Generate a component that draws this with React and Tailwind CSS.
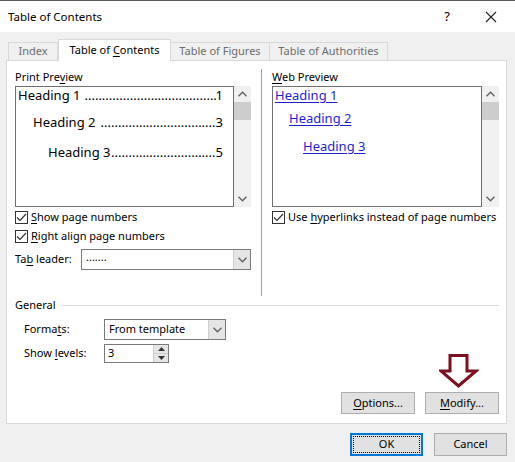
import React from "react";

const font = { fontFamily: '"Noto Sans", "Open Sans", sans-serif' };

const Chevron = ({ dir = "down", className = "" }) => (
  <svg width="9" height="6" viewBox="0 0 9 6" className={className}>
    {dir === "down" ? (
      <path d="M0.5 0.8 L4.5 4.8 L8.5 0.8" fill="none" stroke="#606060" strokeWidth="1.3" />
    ) : (
      <path d="M0.5 5.2 L4.5 1.2 L8.5 5.2" fill="none" stroke="#606060" strokeWidth="1.3" />
    )}
  </svg>
);

const Scrollbar = () => (
  <div className="flex w-[17px] shrink-0 flex-col items-center bg-[#f0f0f0]">
    <div className="flex h-[16px] items-center justify-center">
      <Chevron dir="up" />
    </div>
    <div className="h-[18px] w-[17px] bg-[#cdcdcd]" />
    <div className="flex-1" />
    <div className="flex h-[16px] items-center justify-center">
      <Chevron />
    </div>
  </div>
);

const Check = ({ children }) => (
  <div className="flex h-[14px] items-center gap-[3px] whitespace-nowrap text-black">
    <div className="flex h-[13px] w-[13px] shrink-0 items-center justify-center border border-[#333] bg-white">
      <svg width="11" height="9" viewBox="0 0 11 9">
        <path d="M1 4.5 L4 7.5 L10 1" fill="none" stroke="#333" strokeWidth="1.2" />
      </svg>
    </div>
    <span>{children}</span>
  </div>
);

// print preview line with dotted leader
const TocLine = ({ indent, label, dots, gap, page }) => (
  <div className={`flex items-end whitespace-nowrap ${indent}`}>
    <span className="shrink-0">{label}</span>
    <span className={`min-w-0 flex-1 overflow-hidden text-right ${gap}`}>{".".repeat(dots)}</span>
    <span className="shrink-0">{page}</span>
  </div>
);

const Btn = ({ children, className = "" }) => (
  <div
    className={`flex items-center justify-center border border-[#adadad] bg-[#e1e1e1] text-black ${className}`}
  >
    <span>{children}</span>
  </div>
);

const U = ({ children }) => <span className="underline underline-offset-2">{children}</span>;

export default function App() {
  return (
    <div style={font} className="flex h-[462px] w-[515px] flex-col overflow-hidden border-t border-[#5a5a5a] bg-[#f0f0f0] text-[11px]">
      {/* Title bar */}
      <div className="flex h-[31px] items-center bg-white pl-[8px] text-[11.5px] text-black">
        <span>Table of Contents</span>
        <span className="ml-auto mr-[35px] text-[13px]">?</span>
        <svg width="12" height="12" viewBox="0 0 12 12" className="mr-[18px]">
          <path d="M1 1 L11 11 M11 1 L1 11" stroke="#222" strokeWidth="1.1" />
        </svg>
      </div>

      {/* Tabs */}
      <div className="mt-[7px] flex h-[21px] items-end pl-[8px]">
        <div className="flex h-[18px] w-[50px] items-center justify-center border border-b-0 border-[#d9d9d9] bg-[#f0f0f0] text-[#6d6d6d]">
          <span>Index</span>
        </div>
        <div className="relative z-10 -mb-px flex h-[22px] w-[113px] items-center justify-center border border-b-0 border-[#d9d9d9] bg-white text-black">
          <span>
            Table of <U>C</U>ontents
          </span>
        </div>
        <div className="flex h-[18px] w-[99px] items-center justify-center border border-b-0 border-l-0 border-[#d9d9d9] bg-[#f0f0f0] text-[#6d6d6d]">
          <span>Table of Figures</span>
        </div>
        <div className="flex h-[18px] w-[118px] items-center justify-center border border-b-0 border-l-0 border-[#d9d9d9] bg-[#f0f0f0] text-[#6d6d6d]">
          <span>Table of Authorities</span>
        </div>
      </div>

      {/* Panel */}
      <div className="ml-[6px] flex h-[364px] w-[501px] flex-col border border-[#d9d9d9] bg-white pl-[8px] pr-[7px] text-black">
        <div className="flex h-[235px] shrink-0 pt-[8px]">
          {/* Print preview */}
          <div className="flex w-[236px] shrink-0 flex-col">
            <div className="h-[17px] leading-[15px]">
              <span>
                Print Pre<U>v</U>iew
              </span>
            </div>
            <div className="flex h-[121px]">
              <div className="flex min-w-0 flex-1 flex-col border border-[#707070] pl-[2px] pr-[10px] text-[13px] leading-[17px]">
                <TocLine indent="" label="Heading 1" gap="ml-[4px]" dots={38} page="1" />
                <div className="h-[10px]" />
                <TocLine indent="pl-[15px]" label="Heading 2" gap="ml-[4px]" dots={33} page="3" />
                <div className="h-[13px]" />
                <TocLine indent="pl-[30px]" label="Heading 3" gap="" dots={30} page="5" />
              </div>
              <Scrollbar />
            </div>
            <div className="mt-[3px] flex flex-col gap-[5px]">
              <Check>
                <U>S</U>how page numbers
              </Check>
              <Check>
                <U>R</U>ight align page numbers
              </Check>
            </div>
            <div className="mt-[6px] flex items-center">
              <span className="w-[66px]">
                Ta<U>b</U> leader:
              </span>
              <div className="flex h-[21px] flex-1 items-center border border-[#7a7a7a] bg-white pl-[4px]">
                <span className="flex-1 -translate-y-[2px]">.......</span>
                <div className="flex h-full w-[17px] items-center justify-center border-l border-[#cfcfcf] bg-[#e5e5e5]">
                  <Chevron />
                </div>
              </div>
            </div>
          </div>

          {/* separator */}
          <div className="mx-[10px] w-px shrink-0 bg-[#a0a0a0]" />

          {/* Web preview */}
          <div className="flex min-w-0 flex-1 flex-col">
            <div className="h-[17px] leading-[15px]">
              <span>
                <U>W</U>eb Preview
              </span>
            </div>
            <div className="flex h-[121px]">
              <div className="flex min-w-0 flex-1 flex-col items-start border border-[#707070] pl-[2px] text-[13px] leading-[17px] text-[#1f1fd2]">
                <span className="underline underline-offset-2">Heading 1</span>
                <span className="mt-[6px] pl-[14px] underline underline-offset-2">Heading 2</span>
                <span className="mt-[11px] pl-[28px] underline underline-offset-2">Heading 3</span>
              </div>
              <Scrollbar />
            </div>
            <div className="mt-[3px]">
              <Check>
                Use <U>h</U>yperlinks instead of page numbers
              </Check>
            </div>
          </div>
        </div>

        {/* General */}
        <div className="mt-[1px] flex h-[16px] items-center gap-[6px]">
          <span>General</span>
          <div className="h-px flex-1 bg-[#dcdcdc]" />
        </div>
        <div className="mt-[6px] flex items-center pl-[9px]">
          <span className="w-[80px]">
            Forma<U>t</U>s:
          </span>
          <div className="flex h-[21px] w-[122px] items-center border border-[#7a7a7a] bg-white pl-[4px]">
            <span className="flex-1">From template</span>
            <div className="flex h-full w-[17px] items-center justify-center border-l border-[#cfcfcf] bg-[#e5e5e5]">
              <Chevron />
            </div>
          </div>
        </div>
        <div className="mt-[4px] flex items-center pl-[9px]">
          <span className="w-[80px]">
            Show <U>l</U>evels:
          </span>
          <div className="flex h-[19px] w-[65px] items-center border border-[#7a7a7a] bg-white pl-[3px]">
            <span className="flex-1">3</span>
            <div className="flex h-full w-[15px] flex-col border-l border-[#cfcfcf] bg-[#e5e5e5]">
              <div className="flex flex-1 items-center justify-center border-b border-[#cfcfcf]">
                <svg width="7" height="4" viewBox="0 0 7 4">
                  <path d="M0 4 L3.5 0 L7 4 Z" fill="#333" />
                </svg>
              </div>
              <div className="flex flex-1 items-center justify-center">
                <svg width="7" height="4" viewBox="0 0 7 4">
                  <path d="M0 0 L3.5 4 L7 0 Z" fill="#333" />
                </svg>
              </div>
            </div>
          </div>
        </div>

        {/* Options / Modify */}
        <div className="mt-[-9px] flex justify-end">
          <svg width="40" height="34" viewBox="0 0 40 34" className="mr-[20px]">
            <path
              d="M11 1.5 H28 V17 H37 L19.5 32 L2 17 H11 Z"
              fill="none"
              stroke="#7a1020"
              strokeWidth="3"
              strokeLinejoin="miter"
            />
          </svg>
        </div>
        <div className="mt-[4px] flex justify-end gap-[10px]">
          <Btn className="h-[22px] w-[74px]">
            <U>O</U>ptions...
          </Btn>
          <Btn className="h-[22px] w-[74px]">
            <U>M</U>odify...
          </Btn>
        </div>
      </div>

      {/* Bottom buttons */}
      <div className="mt-[9px] flex justify-end gap-[11px] pr-[8px]">
        <div className="flex h-[23px] w-[73px] items-center justify-center border-2 border-[#0078d7] bg-[#e1e1e1] p-[1px] text-black">
          <div className="flex h-full w-full items-center justify-center border border-dotted border-black">OK</div>
        </div>
        <Btn className="h-[23px] w-[73px]">Cancel</Btn>
      </div>
    </div>
  );
}
